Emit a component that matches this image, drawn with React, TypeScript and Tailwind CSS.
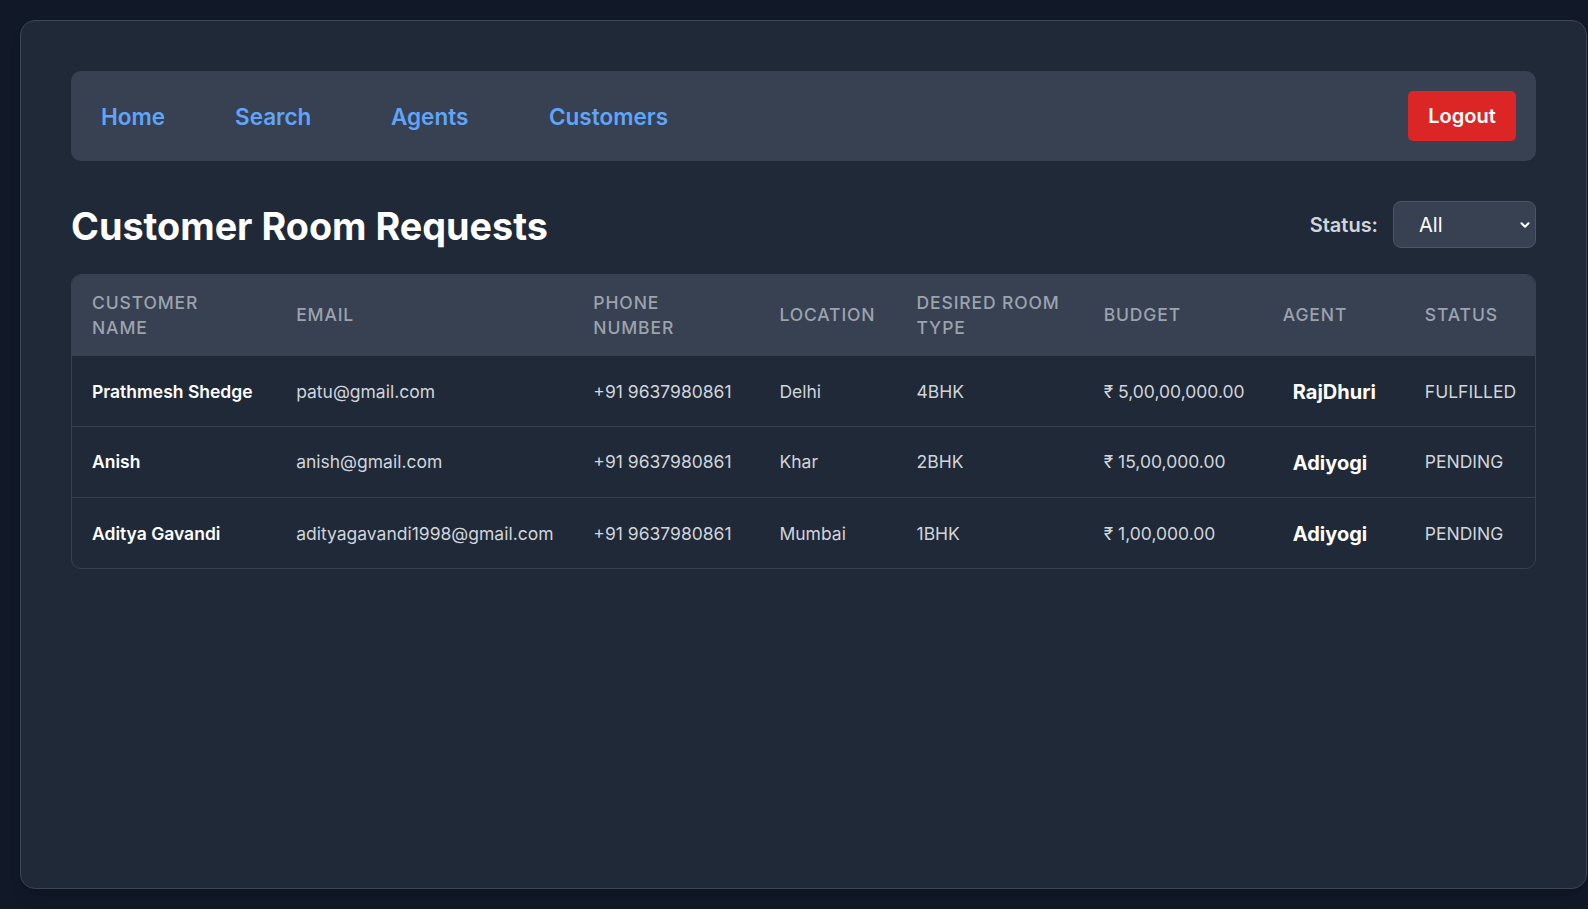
import { ChevronDown } from "lucide-react";

const requests = [
  {
    name: "Prathmesh Shedge",
    email: "patu@gmail.com",
    phone: "+91 9637980861",
    location: "Delhi",
    roomType: "4BHK",
    budget: "₹ 5,00,00,000.00",
    agent: "RajDhuri",
    status: "FULFILLED",
  },
  {
    name: "Anish",
    email: "anish@gmail.com",
    phone: "+91 9637980861",
    location: "Khar",
    roomType: "2BHK",
    budget: "₹ 15,00,000.00",
    agent: "Adiyogi",
    status: "PENDING",
  },
  {
    name: "Aditya Gavandi",
    email: "adityagavandi1998@gmail.com",
    phone: "+91 9637980861",
    location: "Mumbai",
    roomType: "1BHK",
    budget: "₹ 1,00,000.00",
    agent: "Adiyogi",
    status: "PENDING",
  },
];

const headers = [
  "Customer Name",
  "Email",
  "Phone Number",
  "Location",
  "Desired Room Type",
  "Budget",
  "Agent",
  "Status",
];

export default function App() {
  return (
    <div className="min-h-screen bg-[#111827] pt-5 pl-5 font-['Inter',sans-serif]">
      <div className="w-[1567px] h-[869px] bg-[#1f2937] border border-[#3b4556] rounded-[15px] p-[50px] shadow-lg">
        {/* navbar */}
        <nav className="h-[90px] bg-[#374151] rounded-[10px] pl-[30px] pr-[20px] flex items-center justify-between">
          <div className="flex items-center pt-[2px] text-[22.5px] font-semibold text-[#60a5fa]">
            <a href="#" className="w-[134px]">Home</a>
            <a href="#" className="w-[156px]">Search</a>
            <a href="#" className="w-[158px]">Agents</a>
            <a href="#">Customers</a>
          </div>
          <button className="w-[108px] h-[50px] bg-[#dc2626] text-white text-[20px] font-semibold rounded-[5px]">
            Logout
          </button>
        </nav>

        <div className="mt-[40px] mb-[26px] h-[47px] flex items-center justify-between">
          <h1 className="pt-[3px] text-[37.75px] font-bold text-white">Customer Room Requests</h1>
          <div className="flex items-center gap-[15px]">
            <label className="text-[20px] font-semibold text-[#d1d5db]">Status:</label>
            <div className="relative">
              <select className="appearance-none w-[143px] h-[47px] bg-[#374151] border border-[#4b5563] rounded-[8px] pl-[25px] text-[20px] text-white outline-none">
                <option>All</option>
                <option>Pending</option>
                <option>Fulfilled</option>
              </select>
              <ChevronDown
                size={14}
                strokeWidth={3.5}
                className="absolute right-[4px] top-[17px] text-white pointer-events-none"
              />
            </div>
          </div>
        </div>

        <div className="border border-[#374151] rounded-[10px] overflow-hidden">
          <table className="w-full table-fixed border-collapse">
            <colgroup>
              <col className="w-[204px]" />
              <col className="w-[297px]" />
              <col className="w-[186px]" />
              <col className="w-[137px]" />
              <col className="w-[187px]" />
              <col className="w-[179px]" />
              <col className="w-[142px]" />
              <col className="w-[130px]" />
            </colgroup>
            <thead className="bg-[#374151]">
              <tr>
                {headers.map((h) => (
                  <th
                    key={h}
                    className="px-5 py-4 text-left text-[17.5px] leading-[24.5px] font-medium uppercase tracking-wider text-[#9ca3af]"
                  >
                    {h}
                  </th>
                ))}
              </tr>
            </thead>
            <tbody>
              {requests.map((r, i) => (
                <tr
                  key={r.email}
                  className={i > 0 ? "h-[71px] border-t border-[#374151]" : "h-[70px]"}
                >
                  <td className="px-5 pt-[2px] text-[17.5px] font-semibold text-white whitespace-nowrap">{r.name}</td>
                  <td className="px-5 pt-[2px] text-[17.5px] text-[#d1d5db] whitespace-nowrap">{r.email}</td>
                  <td className="px-5 pt-[2px] text-[17.5px] text-[#d1d5db] whitespace-nowrap">{r.phone}</td>
                  <td className="px-5 pt-[2px] text-[17.5px] text-[#d1d5db]">{r.location}</td>
                  <td className="px-5 pt-[2px] text-[17.5px] text-[#d1d5db]">{r.roomType}</td>
                  <td className="px-5 pt-[2px] text-[17.5px] text-[#d1d5db] whitespace-nowrap">{r.budget}</td>
                  <td className="px-5 pt-[2px]">
                    <span className="px-[10px] text-[20px] leading-[30px] font-bold text-white">{r.agent}</span>
                  </td>
                  <td className="px-5 pt-[2px] text-[17.5px] text-[#d1d5db] whitespace-nowrap">{r.status}</td>
                </tr>
              ))}
            </tbody>
          </table>
        </div>
      </div>
    </div>
  );
}
